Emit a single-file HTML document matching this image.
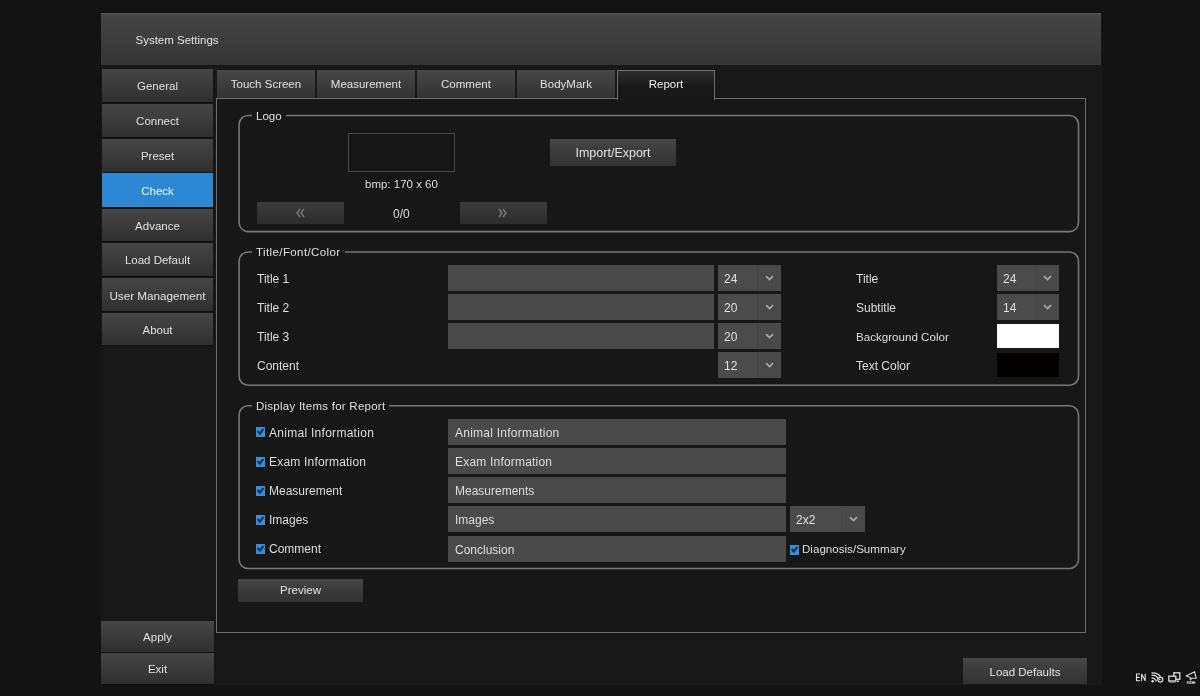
<!DOCTYPE html>
<html><head><meta charset="utf-8">
<style>
*{box-sizing:border-box;margin:0;padding:0}
html,body{width:1200px;height:696px;overflow:hidden;background:#131313;font-family:"Liberation Sans",sans-serif;color:#dcdcdc}
.a{position:absolute;will-change:transform}
#win{left:101px;top:13px;width:1001px;height:672px;background:#181818}
#title{left:101px;top:13px;width:1000px;height:52px;background:linear-gradient(#4a4a4a 0,#444 3px,#353535 100%);border-top:1px solid #555}
#title span{position:absolute;left:34.5px;top:20px;font-size:11.5px;color:#e2e2e2}
.sb{left:102px;width:111px;height:33px;background:linear-gradient(#464646,#2f2f2f);font-size:11.5px;color:#e0e0e0;text-align:center;line-height:33px;padding-top:1px;box-shadow:0 1px 1px #111}
.sb.on{background:#2d88d3;color:#f0f6ff}
.tab{top:70px;width:98px;height:28px;background:linear-gradient(#474747,#333);font-size:11.5px;color:#e0e0e0;text-align:center;line-height:27px;padding-top:1px}
#panel{left:216px;top:98px;width:870px;height:535px;border:1.5px solid #6e6e6e;background:#171717}
#rtab{left:617px;top:70px;width:98px;height:30px;border:1.5px solid #6e6e6e;border-bottom:none;background:linear-gradient(#2c2c2c,#191919 55%,#171717);font-size:11.5px;color:#f0f0f0;text-align:center;line-height:26px}
.grp{border:2px solid #737373;border-radius:10px}
.gl{font-size:11.5px;color:#e0e0e0;background:#171717;padding:0 4px;line-height:14px}
.btn{background:linear-gradient(#474747,#3f3f3f 30%,#323232);font-size:11.5px;color:#e2e2e2;text-align:center}
.lbl{font-size:12px;color:#dedede;line-height:14px;white-space:nowrap}
.inp{background:#4a4a4a;font-size:12px;color:#dedede;padding-left:7px;padding-top:1px;white-space:nowrap}
.cmb{background:#4b4b4b;font-size:12px;color:#e0e0e0;white-space:nowrap}
.cmb>span{padding-top:1px}
.cmb .r{position:absolute;right:0;top:0;bottom:0;width:24px;background:#494949;border-left:1px solid #454545}
.cb{width:9px;height:10px;background:#3a8ed6}
</style></head><body>
<div class="a" id="win"></div>
<div class="a" id="title"><span>System Settings</span></div>

<div class="a sb" style="top:69px">General</div>
<div class="a sb" style="top:104px">Connect</div>
<div class="a sb" style="top:139px">Preset</div>
<div class="a sb on" style="top:173px;height:34px;line-height:34px">Check</div>
<div class="a sb" style="top:209px;height:32px;line-height:32px">Advance</div>
<div class="a sb" style="top:243px">Load Default</div>
<div class="a sb" style="top:278px;font-size:11.7px">User Management</div>
<div class="a sb" style="top:313px;height:32px;line-height:32px">About</div>
<div class="a sb" style="top:621px;left:101px;width:113px;height:31px;line-height:31px">Apply</div>
<div class="a sb" style="top:653px;left:101px;width:113px;height:31px;line-height:31px">Exit</div>

<div class="a tab" style="left:217px">Touch Screen</div>
<div class="a tab" style="left:317px">Measurement</div>
<div class="a tab" style="left:417px">Comment</div>
<div class="a tab" style="left:517px">BodyMark</div>

<div class="a" id="panel"></div>
<div class="a" id="rtab">Report</div>

<!-- Logo group -->
<svg class="a" style="left:0;top:0" width="1200" height="696" viewBox="0 0 1200 696">
<g fill="none" stroke="#777" stroke-width="1.6">
<rect x="239.1" y="115.5" width="839.4" height="116.1" rx="9"/>
<rect x="239.1" y="252" width="839.4" height="133.3" rx="9"/>
<rect x="239.1" y="405.8" width="839.4" height="162.7" rx="9"/>
</g></svg>
<div class="a gl" style="left:252px;top:109px">Logo</div>
<div class="a" style="left:348px;top:133px;width:107px;height:39px;border:1px solid #474747"></div>
<div class="a lbl" style="left:365px;top:177px;font-size:11.5px">bmp: 170 x 60</div>
<div class="a btn" style="left:257px;top:202px;width:87px;height:22px;line-height:22px;color:#888;background:linear-gradient(#3c3c3c,#2c2c2c)"><svg class="a" style="left:39px;top:6px" width="9" height="10" viewBox="0 0 9 10"><polyline points="4,1 1,5 4,9" fill="none" stroke="#7a7a7a" stroke-width="1.4"/><polyline points="8,1 5,5 8,9" fill="none" stroke="#7a7a7a" stroke-width="1.4"/></svg></div>
<div class="a lbl" style="left:393px;top:207px">0/0</div>
<div class="a btn" style="left:460px;top:202px;width:87px;height:22px;line-height:22px;color:#888;background:linear-gradient(#3c3c3c,#2c2c2c)"><svg class="a" style="left:38px;top:6px" width="9" height="10" viewBox="0 0 9 10"><polyline points="1,1 4,5 1,9" fill="none" stroke="#7a7a7a" stroke-width="1.4"/><polyline points="5,1 8,5 5,9" fill="none" stroke="#7a7a7a" stroke-width="1.4"/></svg></div>
<div class="a btn" style="left:550px;top:139px;width:126px;height:27px;line-height:27px;padding-top:1px;font-size:12.5px">Import/Export</div>

<!-- Title/Font/Color group -->
<div class="a gl" style="left:252px;top:245px;letter-spacing:0.4px">Title/Font/Color</div>
<div class="a lbl" style="left:257px;top:272px">Title 1</div>
<div class="a lbl" style="left:257px;top:301px">Title 2</div>
<div class="a lbl" style="left:257px;top:330px">Title 3</div>
<div class="a lbl" style="left:257px;top:359px">Content</div>
<div class="a inp" style="left:448px;top:265px;width:266px;height:26px"></div>
<div class="a inp" style="left:448px;top:294px;width:266px;height:26px"></div>
<div class="a inp" style="left:448px;top:323px;width:266px;height:26px"></div>
<div class="a cmb" style="left:718px;top:265px;width:63px;height:26px;line-height:26px"><div class="r"></div><svg class="a" style="right:7px;top:50%;margin-top:-3px" width="9" height="7" viewBox="0 0 9 7"><polyline points="1,1.2 4.5,4.6 8,1.2" fill="none" stroke="#a8a8a8" stroke-width="1.8"/></svg><span class="a" style="left:6px;top:0">24</span></div>
<div class="a cmb" style="left:718px;top:294px;width:63px;height:26px;line-height:26px"><div class="r"></div><svg class="a" style="right:7px;top:50%;margin-top:-3px" width="9" height="7" viewBox="0 0 9 7"><polyline points="1,1.2 4.5,4.6 8,1.2" fill="none" stroke="#a8a8a8" stroke-width="1.8"/></svg><span class="a" style="left:6px;top:0">20</span></div>
<div class="a cmb" style="left:718px;top:323px;width:63px;height:26px;line-height:26px"><div class="r"></div><svg class="a" style="right:7px;top:50%;margin-top:-3px" width="9" height="7" viewBox="0 0 9 7"><polyline points="1,1.2 4.5,4.6 8,1.2" fill="none" stroke="#a8a8a8" stroke-width="1.8"/></svg><span class="a" style="left:6px;top:0">20</span></div>
<div class="a cmb" style="left:718px;top:352px;width:63px;height:26px;line-height:26px"><div class="r"></div><svg class="a" style="right:7px;top:50%;margin-top:-3px" width="9" height="7" viewBox="0 0 9 7"><polyline points="1,1.2 4.5,4.6 8,1.2" fill="none" stroke="#a8a8a8" stroke-width="1.8"/></svg><span class="a" style="left:6px;top:0">12</span></div>
<div class="a lbl" style="left:856px;top:272px">Title</div>
<div class="a lbl" style="left:856px;top:301px">Subtitle</div>
<div class="a lbl" style="left:856px;top:330px;font-size:11.6px">Background Color</div>
<div class="a lbl" style="left:856px;top:359px">Text Color</div>
<div class="a cmb" style="left:997px;top:265px;width:62px;height:26px;line-height:26px"><div class="r"></div><svg class="a" style="right:7px;top:50%;margin-top:-3px" width="9" height="7" viewBox="0 0 9 7"><polyline points="1,1.2 4.5,4.6 8,1.2" fill="none" stroke="#a8a8a8" stroke-width="1.8"/></svg><span class="a" style="left:6px;top:0">24</span></div>
<div class="a cmb" style="left:997px;top:294px;width:62px;height:26px;line-height:26px"><div class="r"></div><svg class="a" style="right:7px;top:50%;margin-top:-3px" width="9" height="7" viewBox="0 0 9 7"><polyline points="1,1.2 4.5,4.6 8,1.2" fill="none" stroke="#a8a8a8" stroke-width="1.8"/></svg><span class="a" style="left:6px;top:0">14</span></div>
<div class="a" style="left:997px;top:324px;width:62px;height:24px;background:#fff"></div>
<div class="a" style="left:997px;top:353px;width:62px;height:24px;background:#040000"></div>

<!-- Display items group -->
<div class="a gl" style="left:252px;top:399px;letter-spacing:0.25px">Display Items for Report</div>
<div class="a cb" style="left:256px;top:427px"><svg width="9" height="10" viewBox="0 0 9 10" style="display:block"><polyline points="1.6,4 3.9,6.6 7.4,2" fill="none" stroke="#0c2a58" stroke-width="2"/></svg></div><div class="a lbl" style="left:269px;top:426px;letter-spacing:0.28px">Animal Information</div>
<div class="a cb" style="left:256px;top:457px"><svg width="9" height="10" viewBox="0 0 9 10" style="display:block"><polyline points="1.6,4 3.9,6.6 7.4,2" fill="none" stroke="#0c2a58" stroke-width="2"/></svg></div><div class="a lbl" style="left:269px;top:455px;letter-spacing:0.2px">Exam Information</div>
<div class="a cb" style="left:256px;top:486px"><svg width="9" height="10" viewBox="0 0 9 10" style="display:block"><polyline points="1.6,4 3.9,6.6 7.4,2" fill="none" stroke="#0c2a58" stroke-width="2"/></svg></div><div class="a lbl" style="left:269px;top:484px">Measurement</div>
<div class="a cb" style="left:256px;top:515px"><svg width="9" height="10" viewBox="0 0 9 10" style="display:block"><polyline points="1.6,4 3.9,6.6 7.4,2" fill="none" stroke="#0c2a58" stroke-width="2"/></svg></div><div class="a lbl" style="left:269px;top:513px">Images</div>
<div class="a cb" style="left:256px;top:544px"><svg width="9" height="10" viewBox="0 0 9 10" style="display:block"><polyline points="1.6,4 3.9,6.6 7.4,2" fill="none" stroke="#0c2a58" stroke-width="2"/></svg></div><div class="a lbl" style="left:269px;top:542px">Comment</div>
<div class="a inp" style="left:448px;top:419px;width:338px;height:26px;line-height:26px;letter-spacing:0.25px">Animal Information</div>
<div class="a inp" style="left:448px;top:448px;width:338px;height:26px;line-height:26px;letter-spacing:0.2px">Exam Information</div>
<div class="a inp" style="left:448px;top:477px;width:338px;height:26px;line-height:26px">Measurements</div>
<div class="a inp" style="left:448px;top:506px;width:338px;height:26px;line-height:26px">Images</div>
<div class="a inp" style="left:448px;top:536px;width:338px;height:26px;line-height:26px">Conclusion</div>
<div class="a cmb" style="left:790px;top:506px;width:75px;height:26px;line-height:26px"><div class="r"></div><svg class="a" style="right:7px;top:50%;margin-top:-3px" width="9" height="7" viewBox="0 0 9 7"><polyline points="1,1.2 4.5,4.6 8,1.2" fill="none" stroke="#a8a8a8" stroke-width="1.8"/></svg><span class="a" style="left:6px;top:0">2x2</span></div>
<div class="a cb" style="left:790px;top:545px"><svg width="9" height="10" viewBox="0 0 9 10" style="display:block"><polyline points="1.6,4 3.9,6.6 7.4,2" fill="none" stroke="#0c2a58" stroke-width="2"/></svg></div><div class="a lbl" style="left:802px;top:542px;font-size:11.6px">Diagnosis/Summary</div>

<div class="a btn" style="left:238px;top:579px;width:125px;height:23px;line-height:23px">Preview</div>
<div class="a btn" style="left:963px;top:658px;width:124px;height:26px;line-height:26px;padding-top:1px">Load Defaults</div>


<!-- status icons -->
<svg class="a" style="left:1134px;top:672px" width="13" height="10" viewBox="0 0 13 10">
<path d="M6,2 H2.5 V8.8 H6 M2.5,5.4 H5.6" fill="none" stroke="#e4e4e4" stroke-width="1.1"/>
<path d="M7.6,9 V2 L11.2,8.8 V1.8" fill="none" stroke="#e4e4e4" stroke-width="1.1"/>
</svg>
<svg class="a" style="left:1150px;top:671px" width="15" height="13" viewBox="0 0 15 13">
<circle cx="2.6" cy="10.2" r="1.2" fill="#e0e0e0"/>
<path d="M1.5,6.8 Q5,6.8 6.5,10.5" fill="none" stroke="#e0e0e0" stroke-width="1.3"/>
<path d="M1.5,4.2 Q7,4 8.8,9" fill="none" stroke="#e0e0e0" stroke-width="1.3"/>
<path d="M1.5,1.8 Q8,1.6 10.5,5.5" fill="none" stroke="#e0e0e0" stroke-width="1.3"/>
<circle cx="10.3" cy="8.6" r="2.5" fill="#151515" stroke="#e0e0e0" stroke-width="1.2"/>
<circle cx="9.8" cy="8.4" r="0.8" fill="#e0e0e0"/>
</svg>
<svg class="a" style="left:1167px;top:671px" width="15" height="13" viewBox="0 0 15 13">
<rect x="6.8" y="1.8" width="6" height="6.5" fill="none" stroke="#e0e0e0" stroke-width="1.3"/>
<rect x="10" y="9.5" width="1.8" height="1.6" fill="#e0e0e0"/>
<rect x="1.8" y="5.2" width="7" height="4.8" fill="#151515" stroke="#e0e0e0" stroke-width="1.3"/>
<line x1="2" y1="11" x2="8.5" y2="11" stroke="#aaa" stroke-width="1.2"/>
</svg>
<svg class="a" style="left:1185px;top:670px" width="15" height="15" viewBox="0 0 15 15">
<path d="M1.2,6 L9.6,1.8 L11.2,8.2 L6.5,8.2 L5.6,9.6 L5,7.6 Z" fill="none" stroke="#e0e0e0" stroke-width="1.1"/>
<rect x="1.8" y="11.4" width="8.5" height="2.2" fill="#c8c8c8"/>
<rect x="3.3" y="11.9" width="0.9" height="1.2" fill="#151515"/><rect x="5.6" y="11.9" width="0.9" height="1.2" fill="#151515"/>
</svg>
</body></html>
